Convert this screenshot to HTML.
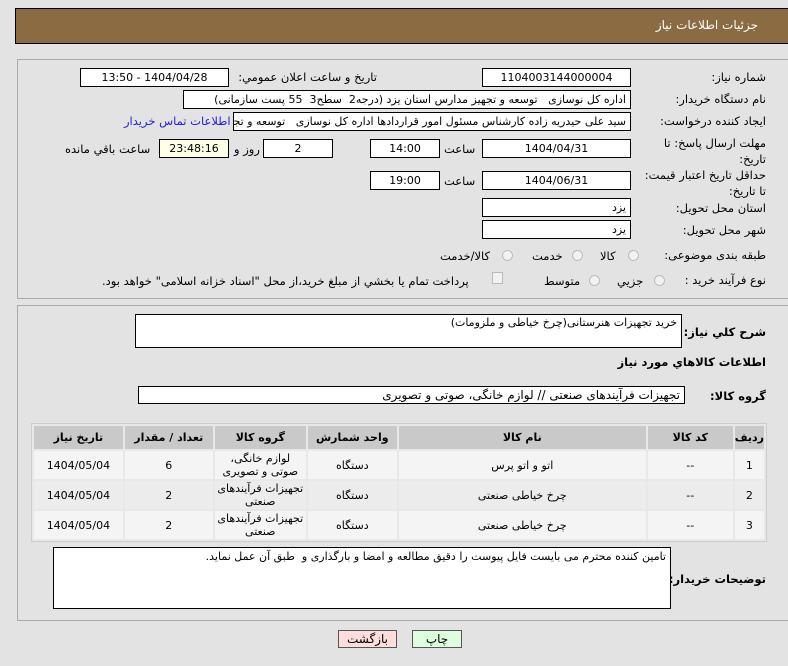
<!DOCTYPE html>
<html><head><meta charset="utf-8"><style>
*{box-sizing:border-box;margin:0;padding:0}
body{width:788px;height:666px;background:#e3e3e3;font-family:"DejaVu Sans","Liberation Sans",sans-serif;font-size:11px;color:#000;position:relative;overflow:hidden;direction:rtl}
.a{position:absolute;white-space:nowrap}
.in{position:absolute;background:#fff;border:1px solid #000;height:19px;line-height:17px;padding:0 4px;overflow:hidden;white-space:nowrap}
.c{text-align:center}
.l{text-align:right}
.panel{position:absolute;border:1px solid #aaa;border-right:none}
table{position:absolute;left:31px;top:423px;width:736px;border-collapse:separate;border-spacing:2px;background:#e8e8e8;border:1px solid #ccc}
td,th{text-align:center;font-size:11px;padding:0}
th{background:#c9c9c9;height:23px;font-weight:bold}
td{background:#f4f4f4;height:28px;line-height:13px}
tr.r2 td{background:#ececec}
.rad{position:absolute;width:11px;height:11px;border-radius:50%;border:1px solid #bbb;background:#f2f2f2}
.lb{font-size:11.5px}
</style></head><body>
<div class="a" style="left:15px;top:8px;width:773px;height:36px;background:#8b6b42;border:1px solid #000;border-right:none"></div>
<div class="a" style="right:30px;top:18px;color:#fff;font-size:12px">جزئیات اطلاعات نیاز</div>

<div class="panel" style="left:17px;top:59px;width:771px;height:240px"></div>
<div class="a lb" style="right:22px;top:70px">شماره نیاز:</div>
<div class="in c" style="left:482px;top:68px;width:149px">1104003144000004</div>
<div class="a lb" style="right:411px;top:70px">تاریخ و ساعت اعلان عمومي:</div>
<div class="in c" style="left:80px;top:68px;width:149px">1404/04/28 - 13:50</div>

<div class="a lb" style="right:22px;top:92px">نام دستگاه خريدار:</div>
<div class="in l" style="left:183px;top:90px;width:448px">اداره کل نوسازی &nbsp; توسعه و تجهیز مدارس استان یزد (درجه2 &nbsp;سطح3 &nbsp;55 پست سازمانی)</div>

<div class="a lb" style="right:22px;top:114px">ايجاد کننده درخواست:</div>
<div class="in l" style="left:233px;top:112px;width:398px">سید علی حیدریه زاده کارشناس مسئول امور قراردادها اداره کل نوسازی &nbsp; توسعه و تجهیز</div>
<div class="a" style="left:124px;top:114px;color:#2222dd;font-size:11.5px">اطلاعات تماس خريدار</div>

<div class="a lb" style="right:22px;top:135px;line-height:16px;text-align:right">مهلت ارسال پاسخ: تا<br>تاریخ:</div>
<div class="in c" style="left:482px;top:139px;width:149px">1404/04/31</div>
<div class="a lb" style="left:444px;top:142px">ساعت</div>
<div class="in c" style="left:370px;top:139px;width:70px">14:00</div>
<div class="in c" style="left:263px;top:139px;width:70px">2</div>
<div class="a lb" style="left:234px;top:142px">روز و</div>
<div class="in c" style="left:159px;top:139px;width:70px;background:#ffffe8">23:48:16</div>
<div class="a lb" style="left:65px;top:142px">ساعت باقي مانده</div>

<div class="a lb" style="right:22px;top:167px;line-height:16px;text-align:right">حداقل تاریخ اعتبار قیمت:<br>تا تاریخ:</div>
<div class="in c" style="left:482px;top:171px;width:149px">1404/06/31</div>
<div class="a lb" style="left:444px;top:174px">ساعت</div>
<div class="in c" style="left:370px;top:171px;width:70px">19:00</div>

<div class="a lb" style="right:22px;top:201px">استان محل تحویل:</div>
<div class="in l" style="left:482px;top:198px;width:149px">یزد</div>
<div class="a lb" style="right:22px;top:223px">شهر محل تحویل:</div>
<div class="in l" style="left:482px;top:220px;width:149px">یزد</div>

<div class="a lb" style="right:22px;top:248px">طبقه بندی موضوعی:</div>
<div class="rad" style="left:628px;top:250px"></div><div class="a lb" style="left:600px;top:249px">کالا</div>
<div class="rad" style="left:572px;top:250px"></div><div class="a lb" style="left:532px;top:249px">خدمت</div>
<div class="rad" style="left:502px;top:250px"></div><div class="a lb" style="left:440px;top:249px">کالا/خدمت</div>

<div class="a lb" style="right:22px;top:273px">نوع فرآيند خريد :</div>
<div class="rad" style="left:654px;top:275px"></div><div class="a lb" style="left:617px;top:274px">جزيي</div>
<div class="rad" style="left:589px;top:275px"></div><div class="a lb" style="left:544px;top:274px">متوسط</div>
<div class="a" style="left:492px;top:272px;width:11px;height:12px;border:1px solid #bbb;background:#f2f2f2"></div>
<div class="a lb" style="left:102px;top:274px">پرداخت تمام يا بخشي از مبلغ خريد،از محل "اسناد خزانه اسلامی" خواهد بود.</div>

<div class="panel" style="left:17px;top:305px;width:771px;height:316px"></div>
<div class="a" style="right:22px;top:325px;font-size:11.5px;font-weight:bold">شرح کلي نياز:</div>
<div class="in l" style="left:135px;top:314px;width:547px;height:34px;line-height:16px">خريد تجهيزات هنرستانی(چرخ خياطی و ملزومات)</div>
<div class="a" style="right:22px;top:355px;font-size:11.5px;font-weight:bold">اطلاعات کالاهاي مورد نياز</div>
<div class="a" style="right:22px;top:389px;font-size:11.5px;font-weight:bold">گروه کالا:</div>
<div class="in l" style="left:138px;top:386px;width:547px;height:18px;line-height:16px;font-size:12px">تجهيزات فرآيندهای صنعتی // لوازم خانگی، صوتی و تصويری</div>

<table>
<tr><th style="width:27px">رديف</th><th style="width:85px">کد کالا</th><th style="width:247px">نام کالا</th><th style="width:89px">واحد شمارش</th><th style="width:91px">گروه کالا</th><th style="width:88px">تعداد / مقدار</th><th>تاريخ نياز</th></tr>
<tr><td>1</td><td>--</td><td>اتو و اتو پرس</td><td>دستگاه</td><td>لوازم خانگی،<br>صوتی و تصويری</td><td>6</td><td>1404/05/04</td></tr>
<tr class="r2"><td>2</td><td>--</td><td>چرخ خياطی صنعتی</td><td>دستگاه</td><td>تجهيزات فرآيندهای<br>صنعتی</td><td>2</td><td>1404/05/04</td></tr>
<tr><td>3</td><td>--</td><td>چرخ خياطی صنعتی</td><td>دستگاه</td><td>تجهيزات فرآيندهای<br>صنعتی</td><td>2</td><td>1404/05/04</td></tr>
</table>

<div class="a" style="right:22px;top:572px;font-size:11.5px;font-weight:bold">توضيحات خريدار:</div>
<div class="in l" style="left:53px;top:547px;width:618px;height:62px;line-height:18px">تامین کننده محترم می بایست فایل پیوست را دقیق مطالعه و امضا و بارگذاری و &nbsp;طبق آن عمل نماید.</div>

<div class="a c" style="left:338px;top:630px;width:59px;height:18px;line-height:16px;border:1px solid #555;background:#fdd;font-size:12px">بازگشت</div>
<div class="a c" style="left:412px;top:630px;width:50px;height:18px;line-height:16px;border:1px solid #555;background:#dfd;font-size:12px">چاپ</div>
</body></html>
